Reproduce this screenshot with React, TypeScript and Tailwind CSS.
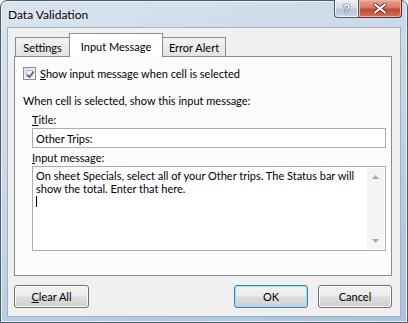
import React from "react";

function Btn({
  children,
  focused = false,
  className = "",
}: {
  children: React.ReactNode;
  focused?: boolean;
  className?: string;
}) {
  return (
    <div
      className={
        "h-[23px] rounded-[3px] border flex items-center justify-center text-[11px] leading-[13px] text-black bg-[linear-gradient(#f2f2f2_0%,#ebebeb_48%,#dddddd_52%,#cfcfcf_100%)] " +
        (focused
          ? "border-[#3c7fb1] shadow-[inset_0_0_0_1px_#9fe0f8]"
          : "border-[#707070] shadow-[inset_0_0_0_1px_#fafafa]") +
        " " +
        className
      }
    >
      {children}
    </div>
  );
}

function Check() {
  return (
    <div className="w-[13px] h-[13px] border border-[#8e8f8f] bg-[linear-gradient(135deg,#dcdcdc,#ffffff)] p-[2px] shrink-0">
      <div className="w-full h-full border border-[#c4c4c4] bg-[linear-gradient(135deg,#e8e8e8,#fbfbfb)] relative">
        <svg viewBox="0 0 9 9" className="absolute left-[-1px] top-[-1px] w-[9px] h-[9px]">
          <path d="M1.2 4.6 L3.4 7 L7.8 1.4" fill="none" stroke="#4a5f97" strokeWidth="1.6" />
        </svg>
      </div>
    </div>
  );
}

export default function App() {
  return (
    <div className="w-[408px] h-[323px] font-[Lato,sans-serif] text-black select-none">
      <div className="w-[408px] h-[323px] rounded-t-[7px] border border-[#4d5c6c] bg-[linear-gradient(160deg,#d9e4ef_0%,#c8d8e8_40%,#b9cde2_70%,#aac2db_100%)] flex flex-col shadow-[inset_0_0_0_1px_#e9f1f8]">
        {/* title bar */}
        <div className="h-[26px] flex items-start justify-between shrink-0">
          <div className="pl-[7px] pt-[6px] text-[12px] leading-[15px] text-black [text-shadow:0_0_6px_#ffffff]">
            Data Validation
          </div>
          <div className="flex mr-[5px] -mt-[1px]">
            <div className="w-[25px] h-[18px] rounded-bl-[4px] border border-t-0 border-[#4f5b69] bg-[linear-gradient(#e9eff5_0%,#d4dee9_45%,#b6c6d6_55%,#c9d6e3_100%)] flex items-center justify-center shadow-[inset_0_0_0_1px_#eef3f8]">
              <span className="text-[13px] leading-[13px] font-bold text-white [text-shadow:0_0_1px_#222,0_0_1px_#222] font-[Liberation_Sans,sans-serif]">
                ?
              </span>
            </div>
            <div className="w-[43px] h-[18px] rounded-br-[4px] border border-t-0 border-l-0 border-[#5b2a22] bg-[linear-gradient(#e9a698_0%,#d77a67_45%,#c24a33_55%,#d4705a_100%)] flex items-center justify-center shadow-[inset_0_0_0_1px_#eeb3a6]">
              <svg viewBox="0 0 14 11" className="w-[14px] h-[11px]">
                <path d="M2 1.5 L12 9.5 M12 1.5 L2 9.5" stroke="#5a2a22" strokeWidth="3.6" strokeLinecap="round" />
                <path d="M2 1.5 L12 9.5 M12 1.5 L2 9.5" stroke="#ffffff" strokeWidth="2.2" strokeLinecap="round" />
              </svg>
            </div>
          </div>
        </div>
        {/* client area */}
        <div className="mx-[6px] h-[290px] border border-[#9fb0c3] bg-[#f0f0f0] pl-[6px] pr-[8px] pt-[5px] flex flex-col text-[11px] leading-[13px]">
          {/* tabs */}
          <div className="flex items-end pl-[1px]">
            <div className="w-[55px] h-[19px] border border-b-0 border-[#898c95] bg-[linear-gradient(#f3f3f3,#e3e3e3)] flex justify-center pt-[3px]">
              Settings
            </div>
            <div className="w-[94px] h-[24px] -ml-[1px] -mb-[1px] relative z-10 border border-b-0 border-[#898c95] bg-white flex justify-center pt-[6px]">
              Input Message
            </div>
            <div className="w-[64px] h-[19px] -ml-[1px] border border-b-0 border-[#898c95] bg-[linear-gradient(#f3f3f3,#e3e3e3)] flex justify-center pt-[3px]">
              Error Alert
            </div>
          </div>
          {/* panel */}
          <div className="h-[220px] border border-[#898c95] bg-[#fcfcfc] pl-[8px] pt-[10px] flex flex-col">
            <div className="flex items-center gap-[4px]">
              <Check />
              <span>
                <span className="underline">S</span>how input message when cell is selected
              </span>
            </div>
            <div className="mt-[14px]">When cell is selected, show this input message:</div>
            <div className="ml-[9px] mt-[6px] flex flex-col">
              <div>
                <span className="underline">T</span>itle:
              </div>
              <div className="mt-[2px] w-[354px] h-[20px] border border-[#abadb3] bg-white flex items-center pl-[3px]">
                Other Trips:
              </div>
              <div className="mt-[3px]">
                <span className="underline">I</span>nput message:
              </div>
              <div className="mt-[2px] w-[354px] h-[85px] border border-[#abadb3] bg-white flex">
                <div className="flex-1 pl-[3px] pt-[2px]">
                  <div>On sheet Specials, select all of your Other trips. The Status bar will</div>
                  <div>show the total. Enter that here.</div>
                  <div className="h-[13px] flex items-center">
                    <div className="w-[1px] h-[11px] bg-black" />
                  </div>
                </div>
                <div className="w-[17px] my-[1px] mr-[1px] bg-[#f4f4f4] flex flex-col">
                  <div className="h-[17px] flex items-center justify-center">
                    <svg viewBox="0 0 7 4" className="w-[7px] h-[4px]">
                      <path d="M0 4 L3.5 0 L7 4 Z" fill="#a6a6a6" />
                    </svg>
                  </div>
                  <div className="flex-1" />
                  <div className="h-[17px] flex items-center justify-center">
                    <svg viewBox="0 0 7 4" className="w-[7px] h-[4px]">
                      <path d="M0 0 L3.5 4 L7 0 Z" fill="#a6a6a6" />
                    </svg>
                  </div>
                </div>
              </div>
            </div>
          </div>
          {/* buttons */}
          <div className="flex mt-[9px]">
            <Btn className="w-[75px]">
              <span>
                <span className="underline">C</span>lear All
              </span>
            </Btn>
            <div className="flex-1" />
            <Btn focused className="w-[74px]">
              OK
            </Btn>
            <Btn className="w-[74px] ml-[10px]">Cancel</Btn>
          </div>
        </div>
      </div>
    </div>
  );
}
